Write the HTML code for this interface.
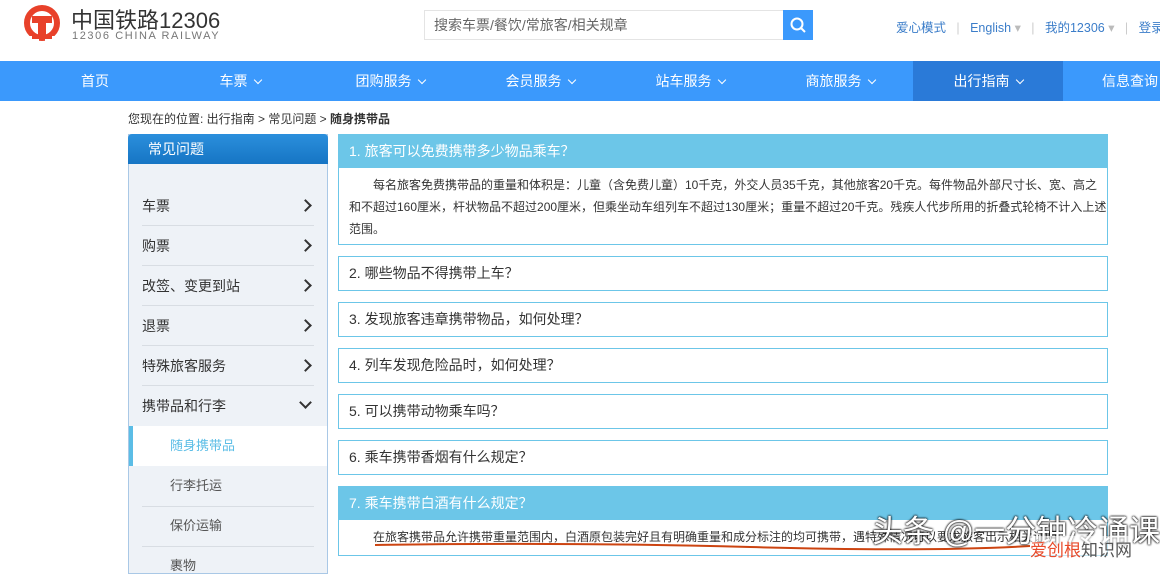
<!DOCTYPE html>
<html><head><meta charset="utf-8"><style>
*{margin:0;padding:0;box-sizing:border-box}
body{width:1160px;height:564px;overflow:hidden;background:#fff;font-family:"Liberation Sans","Noto Sans CJK SC",sans-serif;position:relative;color:#333}
.abs{position:absolute}
.nav{top:61px;left:0;width:1160px;height:40px;background:#3b99fc}
.nav span{position:absolute;top:0;height:40px;line-height:40px;color:#fff;font-size:14px;text-align:center}
.chev{display:inline-block;width:6px;height:6px;border-right:1.5px solid #fff;border-bottom:1.5px solid #fff;transform:rotate(45deg);margin-left:7px;position:relative;top:-3px}
.side{left:128px;top:134px;width:200px;height:440px;border:1px solid #a9c8e6;background:#eef2f7}
.sh{left:128px;top:134px;width:200px;height:30px;background:linear-gradient(#2b8fdc,#1675c4);border-radius:4px 4px 0 0;color:#fff;font-size:14px;line-height:30px;padding-left:20px}
.it{position:absolute;left:142px;width:172px;height:40px;line-height:40px;font-size:14px;color:#333;border-bottom:1px solid #d8dde3}
.it b{position:absolute;right:4px;top:15px;width:9px;height:9px;border-right:2.5px solid #333;border-top:2.5px solid #333;transform:rotate(45deg)}
.sub{position:absolute;left:170px;font-size:13px;color:#555;height:40px;line-height:40px}
.box{position:absolute;left:338px;width:770px;border:1px solid #6cc6e8;background:#fff}
.q{height:33px;line-height:33px;padding-left:10px;font-size:14px;color:#333}
.qa{background:#6cc6e8;color:#fff}
.a{font-size:12px;line-height:22px;padding:6px 0 0 10px;text-indent:24px;color:#333;letter-spacing:0}
</style></head><body>
<svg class="abs" style="left:22px;top:3px" width="40" height="42" viewBox="0 0 40 42"><circle cx="20" cy="20" r="15" fill="none" stroke="#e8412a" stroke-width="6"/><rect x="5" y="33" width="12" height="8" fill="#fff"/><rect x="23" y="33" width="12" height="8" fill="#fff"/><path d="M10 13h20v7h-6v12h6v4H10v-4h6V20h-6z" fill="#e8412a"/></svg>
<div class="abs" style="left:71px;top:3px;font-size:22px;color:#333">中国铁路12306</div>
<div class="abs" style="left:72px;top:30px;font-size:11px;color:#777;letter-spacing:1.6px">12306 CHINA RAILWAY</div>
<div class="abs" style="left:424px;top:10px;width:360px;height:30px;border:1px solid #e4e4e4;font-size:14px;color:#666;line-height:28px;padding-left:9px">搜索车票/餐饮/常旅客/相关规章</div>
<div class="abs" style="left:783px;top:10px;width:30px;height:30px;background:#3b99fc"><svg width="30" height="30"><circle cx="14" cy="14" r="5.5" fill="none" stroke="#fff" stroke-width="2"/><path d="M18 18l4 4" stroke="#fff" stroke-width="2"/></svg></div>
<div class="abs" style="left:896px;top:17px;font-size:12.5px;color:#3b7dc9;white-space:nowrap">爱心模式 <span style="color:#ccc">&nbsp;&nbsp;|&nbsp;&nbsp;</span> English <span style="color:#bbb">▾</span> <span style="color:#ccc">&nbsp;&nbsp;|&nbsp;&nbsp;</span> 我的12306 <span style="color:#bbb">▾</span> <span style="color:#ccc">&nbsp;&nbsp;|&nbsp;&nbsp;</span> 登录</div>
<div class="abs nav">
<span style="left:50px;width:90px">首页</span>
<span style="left:195px;width:90px">车票<i class="chev"></i></span>
<span style="left:340px;width:100px">团购服务<i class="chev"></i></span>
<span style="left:490px;width:100px">会员服务<i class="chev"></i></span>
<span style="left:640px;width:100px">站车服务<i class="chev"></i></span>
<span style="left:790px;width:100px">商旅服务<i class="chev"></i></span>
<span style="left:913px;width:150px;background:#2a7ad8">出行指南<i class="chev"></i></span>
<span style="left:1102px;width:80px;text-align:left">信息查询</span>
</div>
<div class="abs" style="left:128px;top:110px;font-size:12px;color:#333">您现在的位置: 出行指南 &gt; 常见问题 &gt; <b>随身携带品</b></div>
<div class="abs side"></div>
<div class="abs sh">常见问题</div>
<div class="it" style="top:186px">车票<b></b></div>
<div class="it" style="top:226px">购票<b></b></div>
<div class="it" style="top:266px">改签、变更到站<b></b></div>
<div class="it" style="top:306px">退票<b></b></div>
<div class="it" style="top:346px">特殊旅客服务<b></b></div>
<div class="it" style="top:386px;border-bottom:none">携带品和行李<b style="transform:rotate(135deg);top:12px"></b></div>
<div class="abs" style="left:129px;top:426px;width:198px;height:40px;background:#fff;border-left:4px solid #5bbde6"></div>
<div class="sub" style="top:426px;color:#5bbde6">随身携带品</div>
<div class="sub" style="top:466px">行李托运</div>
<div class="abs" style="left:142px;top:506px;width:172px;border-top:1px solid #d8dde3"></div>
<div class="sub" style="top:506px">保价运输</div>
<div class="abs" style="left:142px;top:546px;width:172px;border-top:1px solid #d8dde3"></div>
<div class="sub" style="top:546px">裹物</div>
<div class="box" style="top:134px;height:111px"><div class="q qa">1. 旅客可以免费携带多少物品乘车？</div><div class="a">每名旅客免费携带品的重量和体积是：儿童（含免费儿童）10千克，外交人员35千克，其他旅客20千克。每件物品外部尺寸长、宽、高之和不超过160厘米，杆状物品不超过200厘米，但乘坐动车组列车不超过130厘米；重量不超过20千克。残疾人代步所用的折叠式轮椅不计入上述范围。</div></div>
<div class="box" style="top:256px;height:35px"><div class="q">2. 哪些物品不得携带上车？</div></div>
<div class="box" style="top:302px;height:35px"><div class="q">3. 发现旅客违章携带物品，如何处理？</div></div>
<div class="box" style="top:348px;height:35px"><div class="q">4. 列车发现危险品时，如何处理？</div></div>
<div class="box" style="top:394px;height:35px"><div class="q">5. 可以携带动物乘车吗？</div></div>
<div class="box" style="top:440px;height:35px"><div class="q">6. 乘车携带香烟有什么规定？</div></div>
<div class="box" style="top:486px;height:70px"><div class="q qa">7. 乘车携带白酒有什么规定？</div><div class="a" style="white-space:nowrap;overflow:hidden;padding-top:6px">在旅客携带品允许携带重量范围内，白酒原包装完好且有明确重量和成分标注的均可携带，遇特殊情况可以要求旅客出示相关证明</div></div>
<svg class="abs" style="left:370px;top:540px" width="680" height="12"><path d="M5 5 Q200 2 380 7 T660 6" stroke="#c41" stroke-width="2" fill="none"/></svg>
<div class="abs" style="left:872px;top:506px;font-size:31px;color:#fff;text-shadow:0 0 2px #000,0 0 2px #000;white-space:nowrap">头条 @一分钟冷诵课</div>
<div class="abs" style="left:1030px;top:536px;font-size:17px;color:#e84a2a;background:rgba(255,255,255,.6)">爱创根<span style="color:#555">知识网</span></div>
</body></html>
